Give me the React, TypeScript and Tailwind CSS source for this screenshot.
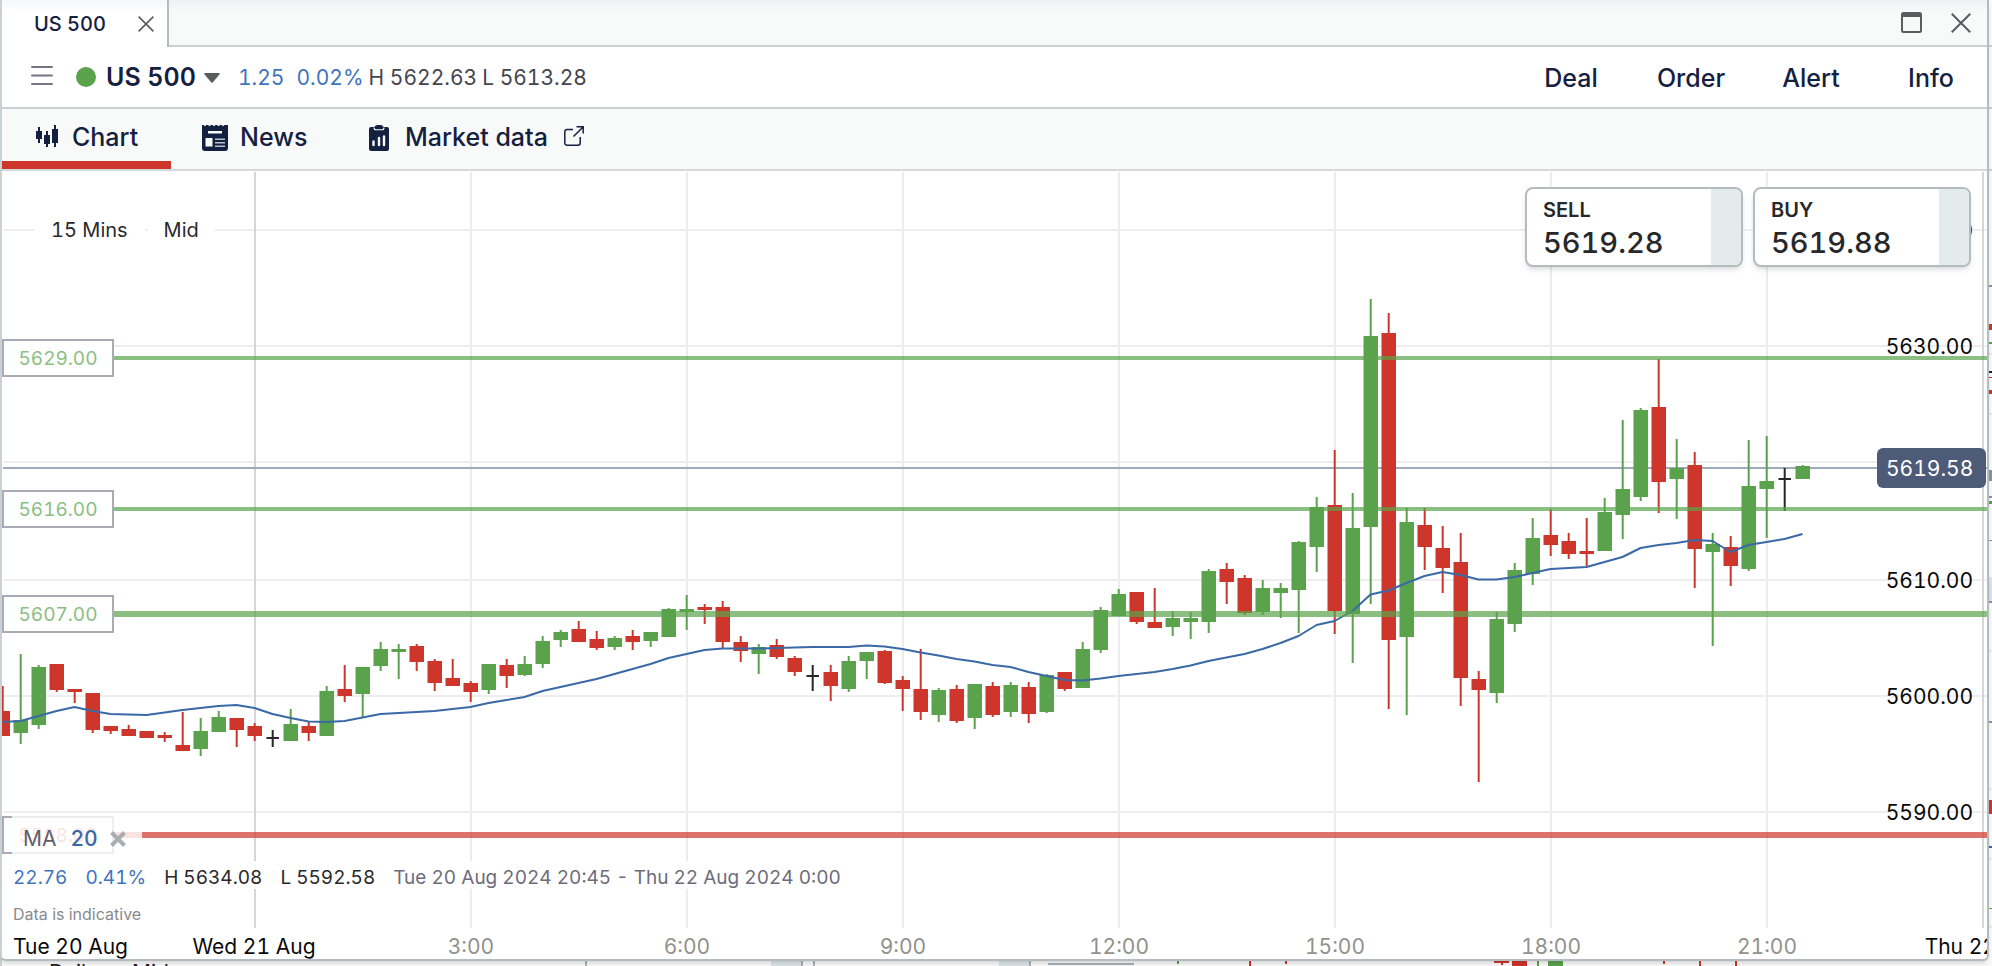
import { useState } from 'react';

type Candle = [number, number, number, number, 'g' | 'r' | 'k'];

// high, body top, body bottom, low, colour
const candles: Candle[] = [
    [686, 711, 736, 736, 'r'], [654, 720, 733, 744, 'g'], [665, 667, 725, 729, 'g'], [664, 664, 690, 692, 'r'],
    [689, 689, 692, 703, 'r'], [693, 693, 730, 733, 'r'], [726, 726, 731, 734, 'r'], [725, 729, 736, 736, 'r'],
    [731, 731, 738, 738, 'r'], [732, 735, 738, 742, 'r'], [712, 745, 751, 751, 'r'], [718, 731, 749, 756, 'g'],
    [711, 717, 732, 732, 'g'], [718, 718, 730, 747, 'r'], [723, 726, 736, 741, 'r'], [730, 737, 739, 747, 'k'],
    [709, 724, 741, 741, 'g'], [722, 726, 733, 741, 'r'], [686, 691, 736, 736, 'g'], [665, 689, 696, 702, 'r'],
    [667, 667, 694, 717, 'g'], [642, 649, 666, 671, 'g'], [644, 649, 652, 679, 'g'], [644, 646, 662, 671, 'r'],
    [659, 661, 683, 691, 'r'], [659, 678, 686, 686, 'r'], [681, 683, 692, 702, 'r'], [664, 664, 690, 694, 'g'],
    [659, 665, 676, 688, 'r'], [656, 664, 675, 676, 'g'], [636, 641, 664, 668, 'g'], [630, 632, 640, 647, 'g'],
    [621, 629, 642, 642, 'r'], [631, 639, 648, 650, 'r'], [636, 638, 647, 650, 'g'], [630, 636, 642, 650, 'r'],
    [632, 632, 641, 647, 'g'], [608, 609, 637, 637, 'g'], [595, 609, 612, 630, 'g'], [604, 607, 610, 624, 'r'],
    [601, 607, 642, 648, 'r'], [636, 642, 651, 662, 'r'], [644, 647, 654, 674, 'g'], [639, 645, 657, 659, 'r'],
    [656, 658, 672, 676, 'r'], [665, 675, 677, 691, 'k'], [665, 672, 686, 701, 'r'], [656, 661, 689, 692, 'g'],
    [652, 652, 661, 679, 'g'], [650, 651, 683, 684, 'r'], [676, 680, 689, 711, 'r'], [649, 689, 712, 720, 'r'],
    [688, 690, 715, 722, 'g'], [685, 689, 721, 723, 'r'], [684, 684, 718, 729, 'g'], [682, 686, 715, 717, 'r'],
    [682, 685, 712, 717, 'g'], [682, 687, 714, 723, 'r'], [674, 675, 712, 713, 'g'], [672, 672, 689, 691, 'r'],
    [642, 649, 688, 688, 'g'], [607, 610, 650, 653, 'g'], [589, 594, 616, 616, 'g'], [592, 592, 622, 624, 'r'],
    [588, 622, 628, 628, 'r'], [611, 618, 627, 636, 'g'], [612, 618, 622, 639, 'g'], [569, 571, 622, 633, 'g'],
    [563, 569, 582, 604, 'r'], [575, 578, 613, 615, 'r'], [580, 588, 612, 615, 'g'], [583, 588, 593, 618, 'g'],
    [541, 542, 590, 633, 'g'], [497, 507, 547, 572, 'g'], [450, 505, 611, 634, 'r'], [493, 528, 614, 663, 'g'],
    [299, 336, 527, 604, 'g'], [313, 333, 640, 709, 'r'], [508, 522, 637, 715, 'g'], [508, 525, 547, 570, 'r'],
    [526, 548, 568, 593, 'r'], [533, 562, 678, 706, 'r'], [671, 679, 690, 782, 'r'], [612, 619, 693, 703, 'g'],
    [563, 570, 624, 632, 'g'], [518, 538, 574, 585, 'g'], [509, 535, 545, 556, 'r'], [533, 541, 554, 559, 'r'],
    [518, 551, 554, 566, 'r'], [498, 512, 551, 551, 'g'], [420, 489, 515, 539, 'g'], [408, 410, 497, 501, 'g'],
    [359, 407, 482, 513, 'r'], [439, 468, 479, 519, 'g'], [452, 465, 549, 588, 'r'], [533, 544, 552, 646, 'g'],
    [536, 547, 566, 586, 'r'], [440, 486, 569, 571, 'g'], [436, 481, 489, 538, 'g'], [468, 478, 480, 511, 'k'],
    [465, 466, 479, 479, 'g'],
];

const movingAverage = [
    722, 721, 716, 711, 707, 711, 714, 714.5, 715, 712.5, 710, 708, 706, 705, 708, 714, 718, 721.5, 722, 721,
    717.5, 714, 713, 712, 711, 709, 707, 703, 700, 697, 691, 687, 683, 679, 674, 669, 664, 658, 654, 650,
    648.5, 648.5, 648.5, 648, 647.5, 647, 647, 647, 645.5, 646.5, 649, 652.5, 655.5, 659, 661.5, 665, 667, 672, 676, 680,
    680.5, 678.5, 676, 674, 672, 669, 665.5, 661, 657.5, 654, 649, 643, 636, 625, 621, 611, 594.5, 590.5, 583, 576,
    572, 575, 579.5, 579.5, 577, 573, 569, 568, 567, 562, 557, 548, 545, 543, 540, 541, 552, 545, 542, 539, 534,
];

const colours = { g: '#5aa24b', r: '#cf362b', k: '#26262b' };

const priceLabels = [
    { y: 230, text: '5640.00' },
    { y: 346, text: '5630.00' },
    { y: 580, text: '5610.00' },
    { y: 696, text: '5600.00' },
    { y: 812, text: '5590.00' },
];

const timeLabels = [
    { x: 471, text: '3:00' },
    { x: 687, text: '6:00' },
    { x: 903, text: '9:00' },
    { x: 1119, text: '12:00' },
    { x: 1335, text: '15:00' },
    { x: 1551, text: '18:00' },
    { x: 1767, text: '21:00' },
];

const levels = [
    { text: '5629.00', y: 358, size: 4, colour: '#5aa24b', tag: 'top-[168px] text-[#8bc082]' },
    { text: '5616.00', y: 509, size: 4, colour: '#5aa24b', tag: 'top-[319px] text-[#8bc082]' },
    { text: '5607.00', y: 614, size: 6, colour: '#5aa24b', tag: 'top-[424px] text-[#8bc082]' },
    { text: '5588.00', y: 835, size: 6, colour: '#cf362b', tag: 'top-[645px] text-[#df7d76]' },
];

const CloseIcon = ({ className }: { className: string }) => (
    <svg className={className} viewBox="0 0 16 16" fill="none" stroke="#5a5c5e" strokeWidth="1.6" aria-hidden="true">
        <path d="M.6.6l14.8 14.8M15.4.6L.6 15.4" />
    </svg>
);

const ChartIcon = () => (
    <svg className="w-[22px] h-[22px] -mt-1" viewBox="0 0 22 22" fill="#14203f" aria-hidden="true">
        <path d="M0 6h6v8H0zM2 2h2v16H2zM8 10h6v9H8zM10 6h2v16h-2zM16 4h6v14h-6zM18 0h2v22h-2z" />
    </svg>
);

const NewsIcon = () => (
    <svg className="w-[26px] h-[26px]" viewBox="0 0 26 26" aria-hidden="true">
        <path fill="#14203f" d="M0 0h1.5L3 1.3 4.5 0H6l1.5 1.3L9 0h1.5L12 1.3 13.500 0H15l1.500 1.300L18 0h1.500L21 1.300 22.500 0H26v23a3 3 0 0 1-3 3H3a3 3 0 0 1-3-3z" />
        <path fill="#f8faf9" d="M6 6h14v2.400H6zM3.500 13h7v8.500h-7z" />
        <path stroke="#b9bfca" strokeWidth="1.500" d="M13 14.200h10M13 17.700h10M13 21.200h10" />
    </svg>
);

const MarketIcon = () => (
    <svg className="w-[20px] h-[26px]" viewBox="0 0 20 26" aria-hidden="true">
        <path fill="#14203f" d="M2 2h3.500c.5-1.200 1.500-2 3-2h3c1.500 0 2.500.8 3 2H18a2 2 0 0 1 2 2v20a2 2 0 0 1-2 2H2a2 2 0 0 1-2-2V4a2 2 0 0 1 2-2z" />
        <path fill="none" stroke="#f8faf9" strokeWidth="1.100" d="M5 2.500c0 1.500.8 2.300 2 2.300h6c1.200 0 2-.8 2-2.300" />
        <path stroke="#f8faf9" strokeWidth="2.400" strokeLinecap="round" d="M4.500 16.500v3.500M10 13v7M15 11.500V20" />
    </svg>
);

const ExternalIcon = () => (
    <svg className="w-[20px] h-[20px] -mt-1" viewBox="0 0 20 20" fill="none" stroke="#14203f" strokeWidth="1.500" aria-hidden="true">
        <path d="M9 3.500H3A2.200 2.200 0 0 0 .8 5.700V17A2.200 2.200 0 0 0 3 19.200h11a2.200 2.200 0 0 0 2.200-2.200v-6M12.500.8h6.700V7.500M19 1L9.500 10.500" />
    </svg>
);

// slivers of the windows that sit behind this one
const BackWindows = () => (
    <svg className="absolute inset-0 w-full h-full" viewBox="0 0 1992 966" aria-hidden="true">
        <path fill="#c9d1d5" d="M0 0h2v966H0zM1989 45h3v2h-3zM1989 107h3v2h-3zM1989 169h3v2h-3z" />
        <path fill="#e8e9ec" d="M1989 353h3v2h-3zM1989 413h3v2h-3zM1989 650h3v2h-3zM1989 788h3v2h-3zM1989 858h3v2h-3zM1989 926h3v2h-3z" />
        <path fill="#8b93a3" d="M1989 285h3v2h-3zM1989 540h3v1h-3zM1989 601h3v2h-3zM1989 721h3v2h-3zM1989 470h3v11h-3zM1989 496h3v2h-3z" />
        <path fill="#d8e4f0" d="M1989 577h3v24h-3z" />
        <path fill="#cf362b" d="M1989 324h3v6h-3zM1989 377h3v1h-3zM1989 390h3v4h-3zM1989 800h3v14h-3z" />
        <path fill="#5aa24b" d="M1989 342h3v2h-3zM1989 501h3v3h-3zM1989 908h3v1h-3z" />
        <path fill="#23233c" d="M1989 371h3v2h-3z" />
        <path fill="#3a67a5" d="M1989 846h3v2h-3z" />
        <path fill="#dde5e8" d="M771 961h30v5h-30zM999 961h30v5h-30z" />
        <path fill="#a9b1b6" d="M585 961h2v5h-2zM801 961h2v5h-2zM813 961h2v5h-2zM1029 961h2v5h-2zM1048 963h86v2h-86z" />
        <path fill="#cf362b" d="M1494 961h15v2h-15zM1501 963h2v2h-2zM1512 961h15v5h-15zM1663 961h2v3h-2zM1699 961h2v5h-2zM1735 961h2v5h-2zM1249 961h2v5h-2zM1285 961h2v3h-2z" />
        <path fill="#5aa24b" d="M1537 961h2v5h-2zM1548 961h15v5h-15zM1177 961h2v3h-2z" />
        <text x="49" y="980" fontSize="21" fill="#222">Daily</text>
        <text x="132" y="980" fontSize="21" fill="#222">Mid</text>
    </svg>
);

const PriceChart = () => (
    <svg className="block w-full h-full tabular-nums" viewBox="2 171 1985 788" preserveAspectRatio="xMinYMin meet" role="img" aria-label="US 500 price chart">
        {[230, 346, 462, 580, 696, 812].map((y) => (
            <path key={y} d={`M3 ${y}H1987`} stroke="#eeeeef" strokeWidth="2" />
        ))}
        {timeLabels.map(({ x }) => (
            <path key={x} d={`M${x} 172V928`} stroke="#ececee" strokeWidth="2" />
        ))}
        <path d="M255 172V928M1983 172V928" stroke="#d6d6da" strokeWidth="2" />
        <path d="M3 468H1987" stroke="#a0aaba" strokeWidth="2" />

        {candles.map(([high, top, bottom, low, colour], i) => {
            const x = 3 + i * 18;
            const half = colour === 'k' ? 6 : 7;
            return (
                <g key={x} fill={colours[colour]}>
                    <rect x={x - 1.3} y={high} width="2" height={low - high} />
                    <rect x={x - half - 0.5} y={top} width={half * 2 + 0.5} height={bottom - top} />
                </g>
            );
        })}

        <polyline points={movingAverage.map((y, i) => `${2.5 + i * 18},${y}`).join(' ')} fill="none" stroke="#3a69a6" strokeWidth="2" strokeLinejoin="round" />

        {levels.map((level) => (
            <rect key={level.text} x="114" y={level.y - level.size / 2} width="1873" height={level.size} fill={level.colour} opacity="0.7" />
        ))}

        <g fontSize="21" fill="#0a0a0a">
            {priceLabels.map((label) => (
                <text key={label.y} x="1973" y={label.y + 8} textAnchor="end">{label.text}</text>
            ))}
            <text x="13" y="954">Tue 20 Aug</text>
            <text x="254" y="954" textAnchor="middle">Wed 21 Aug</text>
            <text x="1983" y="954" textAnchor="middle">Thu 22 Aug</text>
        </g>
        <g fontSize="21" fill="#92928c" textAnchor="middle">
            {timeLabels.map((label) => (
                <text key={label.x} x={label.x} y="954">{label.text}</text>
            ))}
        </g>
    </svg>
);

const DealButton = ({ side, price }: { side: string; price: string }) => (
    <button className="flex w-[218px] h-20 rounded-lg border-2 border-[#b4bcbf] bg-white overflow-hidden text-left text-[#28282a] shadow-md">
        <span className="flex-1 pl-4 pt-2">
            <span className="block text-[20px] leading-[26px] font-semibold">{side}</span>
            <span className="block text-[29px] leading-10 font-medium">{price}</span>
        </span>
        <span className="w-[30px] h-full bg-[#e3ebed]" />
    </button>
);

const App = () => {
    const [tab, setTab] = useState('Chart');
    const [showMa, setShowMa] = useState(true);

    const tabs = [
        { name: 'Chart', icon: <ChartIcon />, className: 'w-[169px] pl-[34px] gap-3.5' },
        { name: 'News', icon: <NewsIcon />, className: 'w-[165px] pl-[31px] gap-3' },
        { name: 'Market data', icon: <MarketIcon />, className: 'pl-[33px] gap-4' },
    ];

    return (
        <div className="relative h-screen overflow-hidden bg-[#fafafa] pr-[3px] pb-[5px] font-['Inter',sans-serif] tabular-nums">
            <BackWindows />
            <div className="relative flex flex-col h-full overflow-hidden rounded-b-md border-2 border-t-0 border-l-[#c9d1d5] border-r-[#b3bcc0] border-b-[#b3bcc0] bg-white shadow-md">
                <div className="flex shrink-0 h-[47px] bg-linear-to-b from-[#ecf1f3] to-[#f8faf9] to-25%">
                    <div className="flex items-center w-[167px] pl-8 pb-2 border-r-2 border-[#b3bcc0] bg-linear-to-b from-[#f4f7f8] to-white to-25%">
                        <span className="w-[104px] pt-2 text-[20px] leading-8 font-medium text-[#14203f]">US 500</span>
                        <button aria-label="Close tab" className="pt-2"><CloseIcon className="w-4 h-4" /></button>
                    </div>
                    <div className="flex flex-1 items-center justify-end gap-[29px] pr-4 border-b-2 border-[#c9d1d5]">
                        <button aria-label="Maximise">
                            <svg className="w-[21px] h-[21px]" viewBox="0 0 21 21" fill="none" stroke="#5a5c5e" aria-hidden="true">
                                <rect x="1" y="1" width="19" height="19" rx="1.500" strokeWidth="2" />
                                <path d="M1 3h19" strokeWidth="4" />
                            </svg>
                        </button>
                        <button aria-label="Close window"><CloseIcon className="w-5 h-5" /></button>
                    </div>
                </div>

                <div className="flex shrink-0 items-center h-[62px] pt-0.5 pl-[29px] border-b-2 border-[#c9d1d5] text-[21px]">
                    <button aria-label="Menu" className="pb-1">
                        <svg className="w-[22px] h-[22px]" viewBox="0 0 22 22" stroke="#777584" strokeWidth="2" strokeLinecap="round" aria-hidden="true">
                            <path d="M1 2h20M1 10.500h20M1 19h20" />
                        </svg>
                    </button>
                    <span className="ml-[23px] mb-0.5 w-5 h-5 rounded-full bg-[#5aa24b]" />
                    <button className="flex items-center ml-2.5 gap-2 text-[25px] font-semibold text-[#14203f]">
                        US 500
                        <svg className="w-4 h-2.5" viewBox="0 0 16 10" fill="#5a5c5e" aria-hidden="true"><path d="M1 0h14a.8.8 0 0 1 .6 1.300L8.700 9.500a1 1 0 0 1-1.400 0L.4 1.300A.8.8 0 0 1 1 0z" /></svg>
                    </button>
                    <span className="ml-[18px] text-[#3f74bd]">1.25</span>
                    <span className="ml-3 text-[#3f74bd]">0.02%</span>
                    <span className="ml-[5px] text-[#46454f]">H 5622.63</span>
                    <span className="ml-[5px] text-[#46454f]">L 5613.28</span>
                    <div className="flex ml-auto gap-2 pt-0.5 text-[25px] font-medium text-[#14203f]">
                        {['Deal', 'Order', 'Alert', 'Info'].map((name) => (
                            <button key={name} className="w-28">{name}</button>
                        ))}
                    </div>
                </div>

                <div className="flex shrink-0 h-[62px] border-b-2 border-[#d3d9dc] bg-[#f8faf9] text-[25px] font-medium text-[#14203f]">
                    {tabs.map(({ name, icon, className }) => (
                        <button key={name} onClick={() => setTab(name)} className={`flex items-center pt-1.5 border-b-8 ${tab === name ? 'border-[#cf362b]' : 'border-transparent'} ${className}`}>
                            {icon}
                            {name}
                            {name === 'Market data' && <ExternalIcon />}
                        </button>
                    ))}
                </div>

                <div className="relative flex-1 min-h-0">
                    <PriceChart />

                    {levels.map((level) => (
                        <div key={level.text} className={`absolute left-0 w-28 h-[38px] border-2 border-[#a9abb6] bg-white text-center text-[19px] leading-9 ${level.tag}`}>
                            {level.text}
                        </div>
                    ))}

                    <div className="absolute top-[43px] left-8 flex gap-[3px] text-[20px] leading-8 text-[#2a2a2d]">
                        <button className="px-[17px] bg-white">15 Mins</button>
                        <button className="px-4 bg-white">Mid</button>
                    </div>

                    <div className="absolute top-4 right-4 flex gap-2.5">
                        <DealButton side="SELL" price="5619.28" />
                        <DealButton side="BUY" price="5619.88" />
                    </div>

                    <div className="absolute top-[277px] right-px w-[109px] h-10 rounded-md bg-[#4d5b78] pl-[9px] text-[21px] leading-[41px] text-white">5619.58</div>

                    <div className="absolute left-2.5 bottom-7 flex flex-col items-start">
                        {showMa && (
                            <div className="flex items-center h-12 w-[130px] pt-1 pl-[11px] gap-3.5 bg-white/80 text-[21px]">
                                <span className="text-[#5f5f6b]">MA</span>
                                <span className="font-medium text-[#3a67a5]">20</span>
                                <button aria-label="Remove MA" onClick={() => setShowMa(false)} className="-ml-0.5">
                                    <svg className="w-4 h-4" viewBox="0 0 16 16" stroke="#abadb3" strokeWidth="4" aria-hidden="true"><path d="M1.500 1.500l13 13M14.500 1.500l-13 13" /></svg>
                                </button>
                            </div>
                        )}
                        <div className="flex h-7 pl-px pr-1 gap-[18px] bg-white/90 text-[19px] leading-[34px] text-[#28282a]">
                            <span className="text-[#3f74bd]">22.76</span>
                            <span className="text-[#3f74bd]">0.41%</span>
                            <span>H 5634.08</span>
                            <span>L 5592.58</span>
                            <span className="text-[#6e6c7a]">Tue 20 Aug 2024 20:45 - Thu 22 Aug 2024 0:00</span>
                        </div>
                        <p className="pl-px pt-2 text-[16px] leading-[34px] text-[#8a8a8e]">Data is indicative</p>
                    </div>
                </div>
            </div>
        </div>
    );
};

export default App;
